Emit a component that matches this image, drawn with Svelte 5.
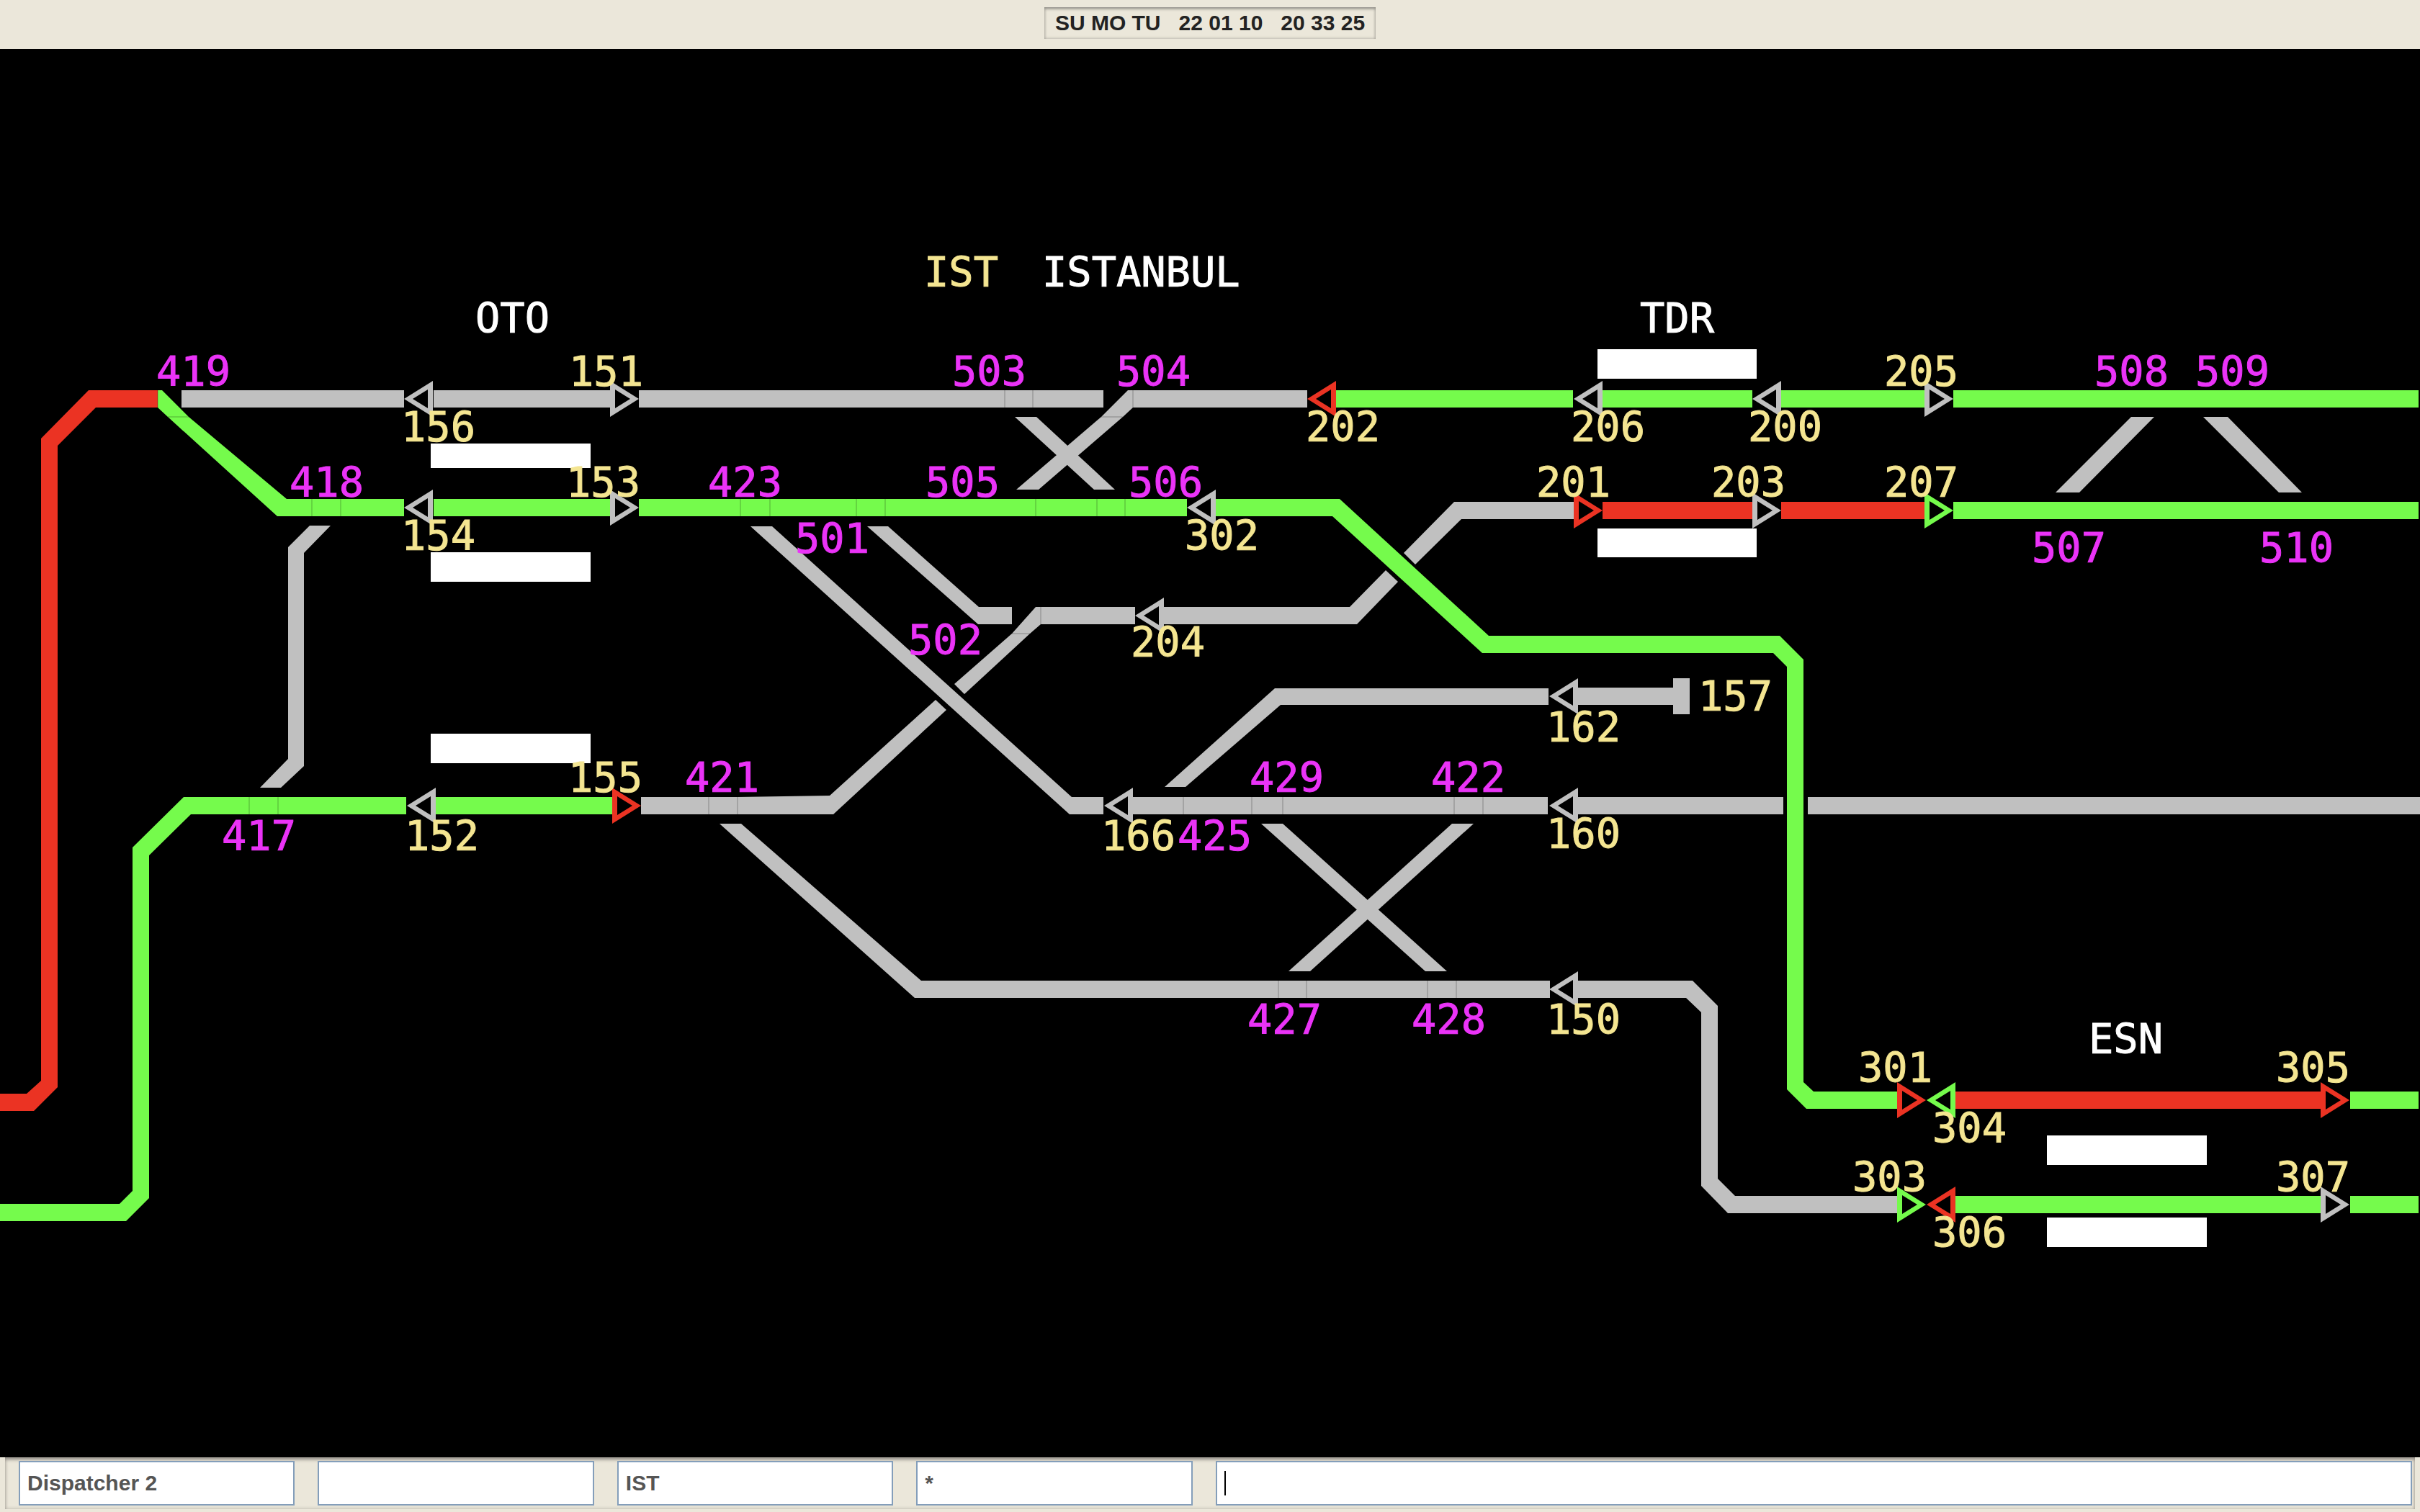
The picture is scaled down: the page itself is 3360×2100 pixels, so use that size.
<script lang="ts">
  type Tone = 'red' | 'green' | 'gray';

  let operator = $state('Dispatcher 2');
  let reserve = $state('');
  let station = $state('IST');
  let filter = $state('*');
  let command = $state('');

  const days = 'SU MO TU';
  const date = '22 01 10';
  const time = '20 33 25';

  // Straight track sections: [x1, x2, centre y, tone]
  const bars: [number, number, number, Tone][] = [
    [252, 561, 554, 'gray'],
    [602, 847, 554, 'gray'],
    [887, 1532, 554, 'gray'],
    [1855, 2184, 554, 'green'],
    [2225, 2433, 554, 'green'],
    [2473, 2672, 554, 'green'],
    [2712, 3358, 554, 'green'],
    [602, 847, 705, 'green'],
    [887, 1648, 705, 'green'],
    [2225, 2433, 709, 'red'],
    [2473, 2672, 709, 'red'],
    [2712, 3358, 709, 'green'],
    [2191, 2324, 967, 'gray'],
    [605, 851, 1119, 'green'],
    [1572, 2149, 1119, 'gray'],
    [2191, 2476, 1119, 'gray'],
    [2510, 3360, 1119, 'gray'],
    [2715, 3223, 1528, 'red'],
    [3263, 3358, 1528, 'green'],
    [2715, 3223, 1673, 'green'],
    [3263, 3358, 1673, 'green']
  ];

  // Bent and diagonal track sections
  const shapes: [string, Tone][] = [
    ['219,542 123,542 57,609 57,1501 37,1519 0,1519 0,1543 47,1543 80,1510 80,619 133,566 219,566', 'red'],
    ['219,542 225,542 262,579 398,693 561,693 561,717 385,717 233,579 219,566', 'green'],
    ['430,730 459,730 422,768 422,1064 390,1094 361,1094 400,1054 400,760', 'gray'],
    ['255,1107 564,1107 564,1131 265,1131 207,1188 207,1664 175,1696 0,1696 0,1672 166,1672 184,1654 184,1177', 'green'],
    ['1566,542 1815,542 1815,566 1573,566 1559,579 1442,680 1411,680 1529,579', 'gray'],
    ['1409,579 1439,579 1548,680 1519,680', 'gray'],
    ['1204,731 1233,731 1359,843 1405,843 1405,867 1358,867', 'gray'],
    ['1438,843 1576,843 1576,867 1445,867 1430,880 1339,964 1325,950 1405,880', 'gray'],
    ['890,1107 1024,1107 1152,1105 1299,972 1314,986 1157,1131 890,1131', 'gray'],
    ['1042,731 1072,731 1488,1107 1532,1107 1532,1131 1485,1131', 'gray'],
    ['1616,843 1874,843 1924,792 1941,808 1884,867 1616,867', 'gray'],
    ['1949,768 2019,697 2185,697 2185,721 2029,721 1965,784', 'gray'],
    ['999,1144 1029,1144 1279,1362 2152,1362 2152,1386 1270,1386', 'gray'],
    ['1770,956 2150,956 2150,979 1778,979 1646,1093 1617,1093', 'gray'],
    ['1751,1144 1781,1144 2009,1349 1979,1349', 'gray'],
    ['2016,1144 2046,1144 1819,1349 1789,1349', 'gray'],
    ['2191,1362 2350,1362 2385,1397 2385,1637 2409,1661 2634,1661 2634,1685 2399,1685 2362,1647 2362,1406 2341,1386 2191,1386', 'gray'],
    ['2959,579 2991,579 2887,684 2854,684', 'gray'],
    ['3059,579 3093,579 3196,684 3164,684', 'gray'],
    ['2323,942 2346,942 2346,992 2323,992', 'gray'],
    ['1687,693 1860,693 2067,883 2471,883 2504,916 2504,1503 2518,1516 2634,1516 2634,1540 2508,1540 2481,1513 2481,926 2462,907 2058,907 1850,717 1687,717', 'green']
  ];

  // Joints between neighbouring sections: [x1, y1, x2, y2]
  const seams: [number, number, number, number][] = [
    [219, 542, 219, 566],
    [233, 579, 262, 579],
    [1529, 579, 1559, 579],
    [1573, 542, 1573, 566],
    [1445, 843, 1445, 867],
    [1405, 880, 1430, 880],
    ...[1395, 1434].map((x): [number, number, number, number] => [x, 542, x, 566]),
    ...[433, 473, 1028, 1069, 1189, 1229, 1438, 1523, 1562].map(
      (x): [number, number, number, number] => [x, 693, x, 717]
    ),
    ...[346, 386, 984, 1024, 1643, 1738, 1781, 2019, 2059].map(
      (x): [number, number, number, number] => [x, 1107, x, 1131]
    ),
    ...[1775, 1814, 1982, 2022].map((x): [number, number, number, number] => [x, 1362, x, 1386])
  ];

  // Platforms: [x, y, width, height]
  const platforms: [number, number, number, number][] = [
    [598, 616, 222, 34],
    [598, 767, 222, 41],
    [598, 1019, 222, 41],
    [2218, 485, 221, 41],
    [2218, 734, 221, 40],
    [2842, 1577, 222, 41],
    [2842, 1691, 222, 41]
  ];

  // Signals: [tip x, centre y, direction the tip points to, tone]
  const signals: [number, number, -1 | 1, Tone][] = [
    [561, 554, -1, 'gray'],
    [887, 554, 1, 'gray'],
    [561, 705, -1, 'gray'],
    [887, 705, 1, 'gray'],
    [565, 1119, -1, 'gray'],
    [890, 1119, 1, 'red'],
    [1648, 705, -1, 'gray'],
    [1815, 554, -1, 'red'],
    [2185, 554, -1, 'gray'],
    [2433, 554, -1, 'gray'],
    [2712, 554, 1, 'gray'],
    [2225, 709, 1, 'red'],
    [2473, 709, 1, 'gray'],
    [2712, 709, 1, 'green'],
    [1576, 855, -1, 'gray'],
    [2151, 967, -1, 'gray'],
    [1533, 1119, -1, 'gray'],
    [2151, 1119, -1, 'gray'],
    [2151, 1374, -1, 'gray'],
    [2674, 1528, 1, 'red'],
    [2675, 1528, -1, 'green'],
    [3262, 1528, 1, 'red'],
    [2674, 1673, 1, 'green'],
    [2675, 1673, -1, 'red'],
    [3262, 1673, 1, 'gray']
  ];

  function signalPath(x: number, y: number, dir: number): string {
    const at = (d: number) => x - dir * d;
    return (
      `M${x} ${y}L${at(40)} ${y - 25}L${at(40)} ${y + 25}Z` +
      `M${at(12)} ${y}L${at(33)} ${y - 13}L${at(33)} ${y + 13}Z`
    );
  }

  // Labels: [text, x, baseline]
  const switches: [string, number, number][] = [
    ['419', 217, 536], ['418', 402, 690], ['417', 308, 1181], ['421', 951, 1100],
    ['423', 983, 690], ['501', 1104, 768], ['502', 1261, 909], ['503', 1322, 536],
    ['504', 1550, 536], ['505', 1285, 690], ['506', 1567, 690], ['425', 1635, 1181],
    ['429', 1735, 1100], ['422', 1987, 1100], ['427', 1732, 1436], ['428', 1960, 1436],
    ['508', 2908, 536], ['509', 3048, 536], ['507', 2821, 781], ['510', 3137, 781]
  ];
  const signalNames: [string, number, number][] = [
    ['IST', 1283, 398],
    ['151', 790, 536], ['156', 557, 613], ['153', 786, 690], ['154', 557, 764],
    ['155', 789, 1100], ['152', 562, 1181], ['302', 1645, 764], ['204', 1570, 912],
    ['202', 1813, 613], ['206', 2181, 613], ['200', 2427, 613], ['205', 2616, 536],
    ['201', 2133, 690], ['203', 2376, 690], ['207', 2616, 690], ['157', 2358, 987],
    ['162', 2147, 1030], ['160', 2147, 1178], ['166', 1529, 1181], ['150', 2147, 1436],
    ['301', 2580, 1503], ['304', 2683, 1587], ['305', 3160, 1503], ['303', 2572, 1655],
    ['306', 2683, 1732], ['307', 3160, 1655]
  ];
  const stations: [string, number, number][] = [
    ['ISTANBUL', 1447, 398],
    ['OTO', 660, 462],
    ['TDR', 2277, 462],
    ['ESN', 2900, 1463]
  ];
</script>

<div class="screen">
  <header class="topbar">
    <time class="clock">{days}{'   '}{date}{'   '}{time}</time>
  </header>

  <main class="board">
    <svg viewBox="0 68 3360 1956" role="img" aria-label="Track diagram">
      {#each bars as [x1, x2, y, tone]}
        <rect class={tone} x={x1} y={y - 12} width={x2 - x1} height="24" />
      {/each}
      {#each shapes as [points, tone]}
        <polygon class={tone} {points} />
      {/each}
      {#each seams as [x1, y1, x2, y2]}
        <line class="seam" {x1} {y1} {x2} {y2} />
      {/each}
      {#each platforms as [x, y, width, height]}
        <rect class="platform" {x} {y} {width} {height} />
      {/each}
      {#each signals as [x, y, dir, tone]}
        <path class={tone} fill-rule="evenodd" d={signalPath(x, y, dir)} />
      {/each}
      {#each switches as [name, x, y]}
        <text class="switch" {x} {y}>{name}</text>
      {/each}
      {#each signalNames as [name, x, y]}
        <text class="signal" {x} {y}>{name}</text>
      {/each}
      {#each stations as [name, x, y]}
        <text class="station" {x} {y}>{name}</text>
      {/each}
    </svg>
  </main>

  <footer class="bottombar">
    <form class="fields" onsubmit={(e) => e.preventDefault()}>
      <input aria-label="Operator" bind:value={operator} />
      <input aria-label="Reserve" bind:value={reserve} />
      <input aria-label="Station" bind:value={station} />
      <input aria-label="Filter" bind:value={filter} />
      <div class="command">
        <input aria-label="Command" bind:value={command} />
        {#if command === ''}<span class="caret"></span>{/if}
      </div>
    </form>
  </footer>
</div>

<style>
  :global(body) {
    margin: 0;
    background: #000;
  }

  .screen {
    display: flex;
    flex-direction: column;
    min-height: 100vh;
    font-family: 'Liberation Sans', Arial, sans-serif;
    font-size: 30px;
    font-weight: bold;
  }

  .topbar {
    display: flex;
    justify-content: center;
    padding: 10px 0 14px;
    background: #ebe7da;
  }

  .clock {
    box-sizing: border-box;
    padding: 0 15px;
    line-height: 44px;
    color: #222;
    white-space: pre;
    box-shadow:
      inset 0 3px 4px -1px #8d8b84,
      inset 0 0 4px #a9a69d;
  }

  .board {
    flex: 1;
    background: #000;
  }

  svg {
    display: block;
    width: 100%;
    height: auto;
  }

  .red {
    fill: #eb3323;
  }

  .green {
    fill: #75fb4c;
  }

  .gray {
    fill: #c0c0c0;
  }

  .platform {
    fill: #fff;
  }

  .seam {
    stroke: #000;
    stroke-opacity: 0.3;
    stroke-width: 1px;
  }

  text {
    font-family: 'DejaVu Sans Mono', monospace;
    font-size: 57px;
    font-weight: normal;
    stroke-width: 1px;
  }

  .switch {
    fill: #ea33f7;
    stroke: #ea33f7;
  }

  .signal {
    fill: #f4e591;
    stroke: #f4e591;
  }

  .station {
    fill: #fff;
    stroke: #fff;
  }

  .bottombar {
    padding: 0 7px 4px;
    background: #ebe7da;
  }

  .fields {
    display: grid;
    grid-template-columns: repeat(4, minmax(0, 3fr)) minmax(0, 13fr);
    gap: 32px;
    padding: 5px 4px 5px 19px;
    box-shadow:
      inset 0 4px 5px -1px #918c86,
      inset 0 0 5px #b5b1a6;
  }

  input {
    box-sizing: border-box;
    width: 100%;
    height: 62px;
    padding: 0 10px;
    border: 2px solid #849eba;
    border-radius: 0;
    background: #fff;
    color: #555;
    font: inherit;
    outline: none;
  }

  .command {
    position: relative;
  }

  .command input {
    display: block;
    caret-color: transparent;
  }

  .caret {
    position: absolute;
    top: 14px;
    left: 12px;
    width: 2px;
    height: 34px;
    background: #000;
    pointer-events: none;
  }
</style>
